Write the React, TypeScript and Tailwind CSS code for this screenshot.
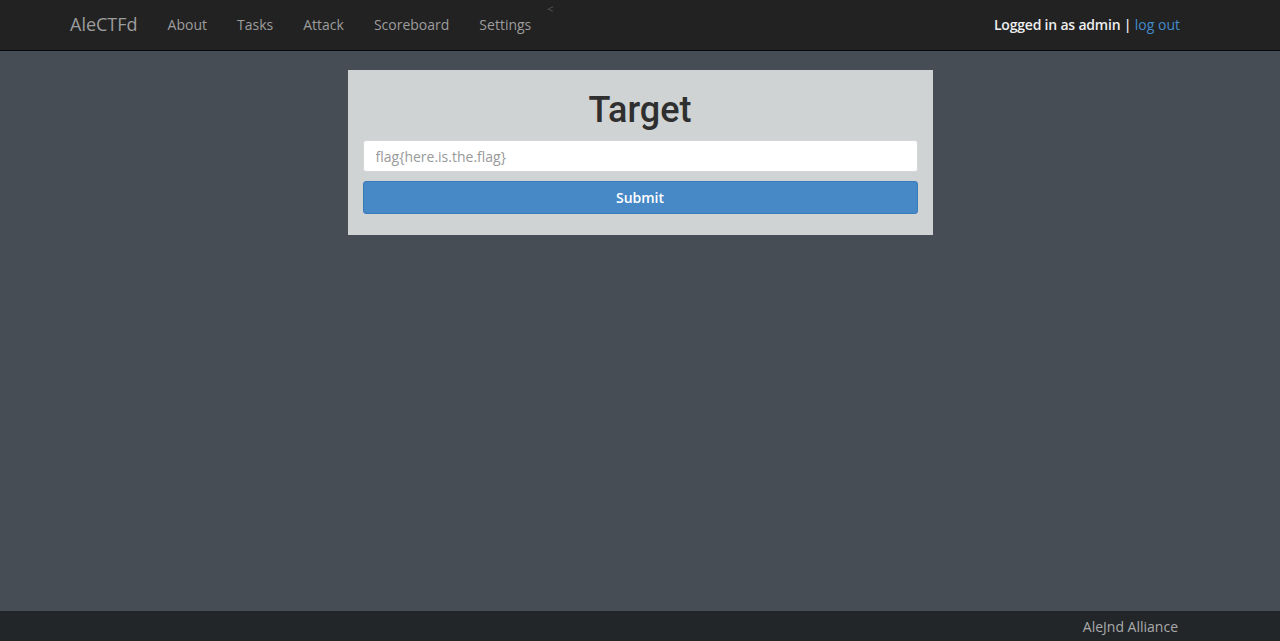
import { useState } from "react";

const openSans = { fontFamily: '"Open Sans", "Liberation Sans", sans-serif' };

export default function App() {
  const [flag, setFlag] = useState("");

  return (
    <div className="flex min-h-[641px] flex-col bg-[#464d55] text-[14px]" style={openSans}>
      <nav className="relative h-[51px] border-b border-[#080808] bg-[#222222]">
        <div className="flex h-[50px] items-center pb-[2px] pl-[70px] pr-[100px]">
          <a className="text-[18px] text-[#9d9d9d]">AleCTFd</a>
          <ul className="ml-[15px] flex items-center">
            {["About", "Tasks", "Attack", "Scoreboard", "Settings"].map((item) => (
              <li key={item}>
                <a className="block px-[15px] text-[14px] text-[#9d9d9d]">{item}</a>
              </li>
            ))}
          </ul>
          <span className="ml-[1px] self-start pt-[1px] text-[11px] text-[#555]">&lt;</span>
          <p className="ml-auto font-semibold tracking-[-0.2px] text-[#eeeeee]">
            Logged in as admin | <a className="font-normal tracking-normal text-[#428bca]">log out</a>
          </p>
        </div>
      </nav>

      <main className="flex flex-1 justify-center pt-[19px]">
        <section className="h-[165px] w-[585px] bg-[#cfd3d4] px-[15px] pt-[18px]">
          <h1
            className="text-center text-[36px] leading-[44px] font-medium text-[#2f2f2f]"
            style={{ fontFamily: 'Roboto, "Liberation Sans", Arial, sans-serif' }}
          >
            Target
          </h1>
          <input
            value={flag}
            onChange={(e) => setFlag(e.target.value)}
            placeholder="flag{here.is.the.flag}"
            className="mt-[8px] block h-[32px] w-full rounded-[3px] border border-[#d6d6d6] bg-white px-[12px] text-[14px] text-[#555] outline-none placeholder:text-[#999]"
          />
          <button className="mt-[9px] block h-[33px] w-full rounded-[3px] border border-[#3a7ab8] bg-[#4788c7] text-[14px] font-semibold text-white">
            Submit
          </button>
        </section>
      </main>

      <footer className="flex h-[30px] items-center justify-end bg-[#222629] pr-[102px] text-[14px] text-[#aaaaaa]">
        AleJnd Alliance
      </footer>
    </div>
  );
}
